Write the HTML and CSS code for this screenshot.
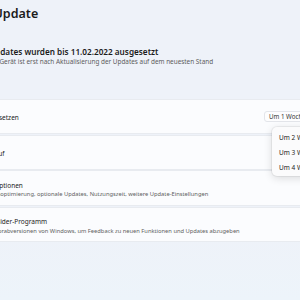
FILE: index.html
```html
<!DOCTYPE html>
<html lang="de">
<head>
<meta charset="UTF-8">
<title>Windows Update</title>
<link rel="stylesheet" href="styles.css">
</head>
<body>
<main class="page">
    <h1 class="title">Windows Update</h1>

    <section class="status">
        <span class="status-icon"></span>
        <div class="status-text">
            <p class="status-title">Updates wurden bis 11.02.2022 ausgesetzt</p>
            <p class="status-sub">Ihr Gerät ist erst nach Aktualisierung der Updates auf dem neuesten Stand</p>
        </div>
    </section>

    <div class="list">
        <div class="card">
            <span class="card-icon"></span>
            <div class="card-text">
                <p class="card-title">Updates aussetzen</p>
            </div>
            <div class="select">Um 1 Woche aussetzen</div>
            <ul class="flyout">
                <li>Um 2 Wochen aussetzen</li>
                <li>Um 3 Wochen aussetzen</li>
                <li>Um 4 Wochen aussetzen</li>
            </ul>
        </div>
        <div class="card">
            <span class="card-icon"></span>
            <div class="card-text">
                <p class="card-title">Updateverlauf</p>
            </div>
        </div>
        <div class="card card-tall">
            <span class="card-icon"></span>
            <div class="card-text">
                <p class="card-title">Erweiterte Optionen</p>
                <p class="card-sub">Übermittlungsoptimierung, optionale Updates, Nutzungszeit, weitere Update-Einstellungen</p>
            </div>
        </div>
        <div class="card">
            <span class="card-icon"></span>
            <div class="card-text">
                <p class="card-title">Windows-Insider-Programm</p>
                <p class="card-sub">Erhalten Sie Vorabversionen von Windows, um Feedback zu neuen Funktionen und Updates abzugeben</p>
            </div>
        </div>
    </div>
</main>
</body>
</html>
```

FILE: styles.css
```css
html, body {
    margin: 0;
    height: 100%;
}
body {
    font-family: "Noto Sans", "Open Sans", sans-serif;
    color: #1b1b1b;
    background: linear-gradient(180deg, #eef2f9 0%, #eef2f9 78%, #edf4fa 100%);
    overflow: hidden;
}
p {
    margin: 0;
    white-space: nowrap;
}
.page {
    margin-left: -65px;
    width: 460px;
}
.title {
    margin: 6px 0 0;
    font-size: 12.5px;
    line-height: 16px;
    font-weight: 600;
}
.status {
    display: flex;
    align-items: center;
    gap: 14px;
    margin-top: 24.5px;
}
.status-icon {
    width: 40px;
    height: 20px;
}
.status-title {
    font-size: 8.2px;
    line-height: 10px;
    font-weight: 600;
}
.status-sub {
    font-size: 6.4px;
    line-height: 10px;
    color: #5d5d5d;
}
.list {
    display: flex;
    flex-direction: column;
    gap: 2.7px;
    margin-top: 33.5px;
}
.card {
    position: relative;
    display: flex;
    align-items: center;
    box-sizing: border-box;
    height: 33px;
    padding: 3px 0 0 12px;
    background: #fbfcfe;
    border-radius: 4px;
    box-shadow: 0 0 0 1px #e8ebf0;
}
.card-tall {
    height: 34px;
}
.card-icon {
    width: 9px;
    height: 9px;
    margin-right: 5px;
}
.card-text {
    width: 303px;
    flex: none;
}
.card-title {
    font-size: 6.5px;
    line-height: 9.5px;
    color: #222;
}
.card-sub {
    font-size: 5.75px;
    line-height: 8.5px;
    color: #606060;
}
.select {
    box-sizing: border-box;
    height: 11px;
    margin-top: -3px;
    padding: 0 4px;
    font-size: 6.2px;
    line-height: 9px;
    white-space: nowrap;
    color: #333;
    background: #fdfdfe;
    border: 1px solid #e3e5ea;
    border-radius: 3px;
}
.flyout {
    position: absolute;
    left: 337px;
    top: 27px;
    z-index: 2;
    margin: 0;
    padding: 2.5px 0 1.5px;
    list-style: none;
    background: #fbfbfc;
    border-radius: 5px;
    box-shadow: 0 2px 8px rgba(0, 0, 0, 0.14), 0 0 0 1px rgba(0, 0, 0, 0.05);
}
.flyout li {
    padding: 0 14px 0 7px;
    font-size: 6.5px;
    line-height: 15px;
    white-space: nowrap;
}
```
